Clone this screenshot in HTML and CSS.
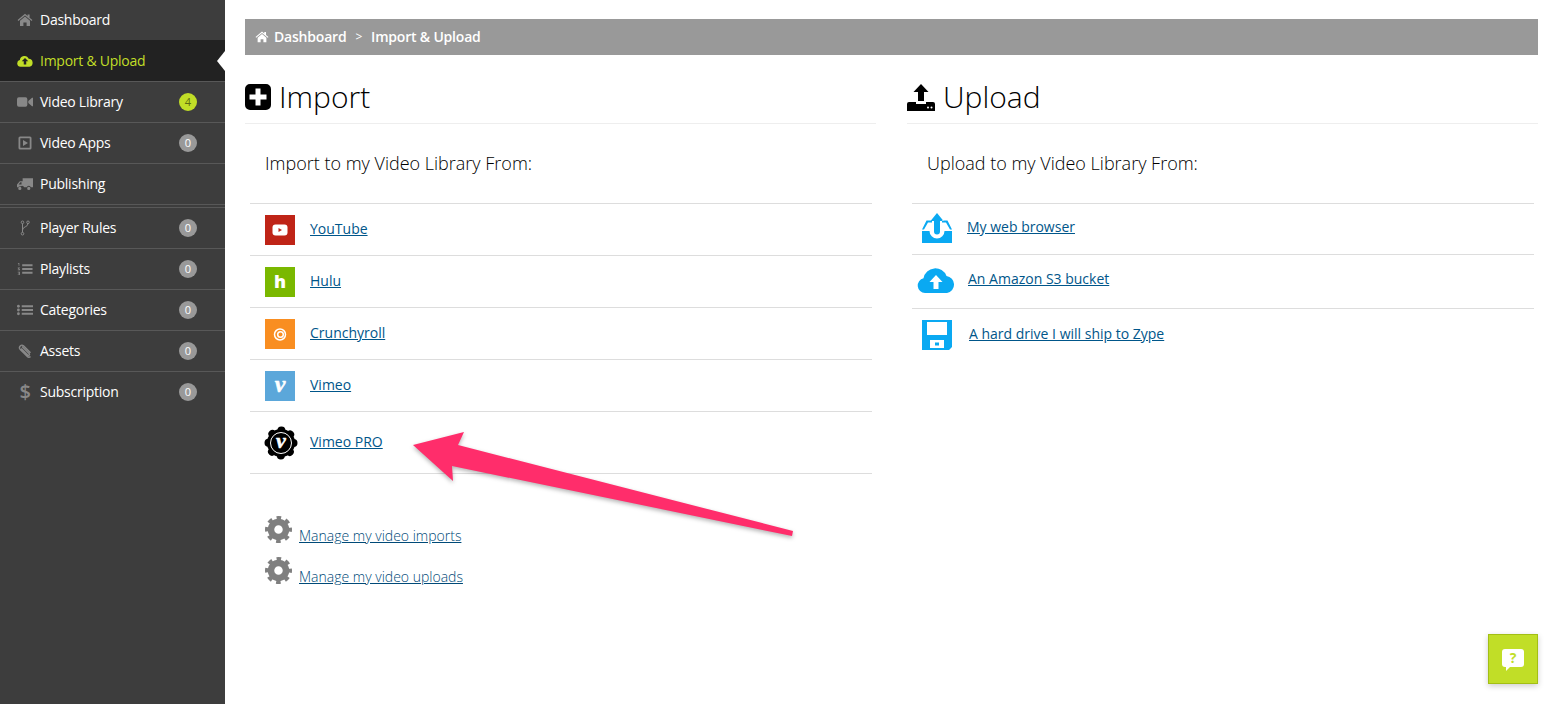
FILE: index.html
```html
<!DOCTYPE html>
<html lang="en">
<head>
    <meta charset="utf-8">
    <title>Import &amp; Upload</title>
    <meta name="viewport" content="width=device-width, initial-scale=1">
    <link rel="stylesheet" href="styles.css">
</head>
<body>

<div class="page">

    <ul class="sidebar">
        <li class="nav-item nav-first">
            <svg class="nav-icon" viewBox="0 0 16 16"><path d="M8 1.800l2.600 2.200V2.400h2v3.300L15.400 8l-.8.900L8 3.400 1.400 8.900.6 8zM8 4.600l5 4.200V14H9.600v-3.400H6.400V14H3V8.800z"/></svg>
            <span class="nav-text">Dashboard</span>
        </li>
        <li class="nav-item nav-active">
            <svg class="nav-icon" viewBox="0 0 18 14"><path fill-rule="evenodd" d="M4 13.500a3.800 3.800 0 0 1-.8-7.500A5.200 5.200 0 0 1 13.200 4.600 4.500 4.500 0 0 1 14 13.500zM9 3.500L5.300 7.400h2.300V11h2.800V7.400h2.300z"/></svg>
            <span class="nav-text">Import &amp; Upload</span>
        </li>
        <li class="nav-item">
            <svg class="nav-icon" viewBox="0 0 17 14"><path d="M0 4a2 2 0 0 1 2-2h7a2 2 0 0 1 2 2v6a2 2 0 0 1-2 2H2a2 2 0 0 1-2-2zM12 6l4-3.500h1v9h-1l-4-3.500z"/></svg>
            <span class="nav-text">Video Library</span>
            <span class="badge badge-green">4</span>
        </li>
        <li class="nav-item">
            <svg class="nav-icon" viewBox="0 0 16 16"><path fill-rule="evenodd" d="M3 1.500h10A1.500 1.500 0 0 1 14.500 3v10a1.500 1.500 0 0 1-1.500 1.500H3A1.500 1.500 0 0 1 1.500 13V3A1.500 1.500 0 0 1 3 1.500zM3.300 3.300v9.400h9.400V3.300zM6 5l5 3-5 3z"/></svg>
            <span class="nav-text">Video Apps</span>
            <span class="badge">0</span>
        </li>
        <li class="nav-item nav-group-end">
            <svg class="nav-icon" viewBox="0 0 17 14"><path fill-rule="evenodd" d="M6 1h11v9.500h-2.300a2.300 2.300 0 0 0-4.400 0H7.700A2.300 2.300 0 0 0 4 9.500a2.300 2.300 0 0 0-2.700 1H0V7.500L3 4h3zM4.800 5.200H3.600L1.700 7.400h3.100zM3 10a1.700 1.700 0 1 1 0 3.400A1.700 1.700 0 0 1 3 10zM12.500 10a1.700 1.700 0 1 1 0 3.400 1.700 1.700 0 0 1 0-3.400z"/></svg>
            <span class="nav-text">Publishing</span>
        </li>
        <li class="nav-item">
            <svg class="nav-icon" viewBox="0 0 16 16"><g fill="none" stroke="#888" stroke-width="1"><circle cx="5.500" cy="2.300" r="1.300"/><circle cx="11" cy="2.300" r="1.300"/><circle cx="5.500" cy="13.700" r="1.300"/><path d="M5.500 3.600v8.800M11 3.600c0 3.500-5.500 3-5.500 6.400"/></g></svg>
            <span class="nav-text">Player Rules</span>
            <span class="badge">0</span>
        </li>
        <li class="nav-item">
            <svg class="nav-icon" viewBox="0 0 17 14"><path d="M5.500 2h11v2h-11zM5.500 6h11v2h-11zM5.500 10h11v2h-11zM1 .5h1.500v3H1.700V1.400H1zM.8 5.500h2.400v.8H1.800l1.400 1.300v.7H.8v-.8h1.300L.8 6.200zM.8 10h2.400v3.500H.8v-.7h1.600v-.7H1.300v-.7h1.100v-.7H.8z"/></svg>
            <span class="nav-text">Playlists</span>
            <span class="badge">0</span>
        </li>
        <li class="nav-item">
            <svg class="nav-icon" viewBox="0 0 17 14"><path d="M5 2h12v2H5zM5 6h12v2H5zM5 10h12v2H5z"/><circle cx="1.500" cy="3" r="1.500"/><circle cx="1.500" cy="7" r="1.500"/><circle cx="1.500" cy="11" r="1.500"/></svg>
            <span class="nav-text">Categories</span>
            <span class="badge">0</span>
        </li>
        <li class="nav-item">
            <svg class="nav-icon" viewBox="0 0 16 16"><path fill="none" stroke="#888" stroke-width="1.400" d="M13.500 13.500a2.200 2.200 0 0 1-3.200 0L3 6.200a2.500 2.500 0 0 1 3.500-3.500l7 7M5 3.500l7.300 7.300a1 1 0 0 1-1.400 1.400L4.200 5.500"/></svg>
            <span class="nav-text">Assets</span>
            <span class="badge">0</span>
        </li>
        <li class="nav-item">
            <span class="nav-icon nav-glyph">$</span>
            <span class="nav-text">Subscription</span>
            <span class="badge">0</span>
        </li>
    </ul>

    <div class="content">

        <div class="breadcrumb">
            <svg class="crumb-home" viewBox="0 0 16 16"><path d="M8 1.800l2.600 2.200V2.400h2v3.300L15.400 8l-.8.900L8 3.400 1.400 8.900.6 8zM8 4.600l5 4.200V14H9.600v-3.400H6.400V14H3V8.800z"/></svg>
            <span>Dashboard</span>
            <span class="crumb-sep">&gt;</span>
            <span>Import &amp; Upload</span>
        </div>

        <div class="columns">

            <div class="column">
                <h2 class="column-title">
                    <svg class="title-icon" viewBox="0 0 26 26"><path fill-rule="evenodd" d="M5 0h16a5 5 0 0 1 5 5v16a5 5 0 0 1-5 5H5a5 5 0 0 1-5-5V5a5 5 0 0 1 5-5zM10.500 4.500v6h-6v5h6v6h5v-6h6v-5h-6v-6z"/></svg>
                    Import
                </h2>
                <p class="lead">Import to my Video Library From:</p>
                <ul class="sources">
                    <li class="source">
                        <svg class="source-icon" viewBox="0 0 30 30"><rect width="30" height="30" fill="#bf2417"/><rect x="7.500" y="9.500" width="15" height="11" rx="3" fill="#fff"/><path d="M13.500 13l3.500 2-3.500 2z" fill="#bf2417"/></svg>
                        <a href="#">YouTube</a>
                    </li>
                    <li class="source">
                        <svg class="source-icon" viewBox="0 0 30 30"><rect width="30" height="30" fill="#7ab800"/><text x="15" y="20.500" class="mark mark-hulu">h</text></svg>
                        <a href="#">Hulu</a>
                    </li>
                    <li class="source">
                        <svg class="source-icon" viewBox="0 0 30 30"><rect width="30" height="30" fill="#f98e21"/><g fill="none" stroke="#fff"><circle cx="15" cy="15.500" r="5.500" stroke-width="1.500"/><circle cx="15.500" cy="15.500" r="2.800" stroke-width="1.500"/></g></svg>
                        <a href="#">Crunchyroll</a>
                    </li>
                    <li class="source">
                        <svg class="source-icon" viewBox="0 0 30 30"><rect width="30" height="30" fill="#5ba7da"/><text x="15" y="20.500" class="mark mark-vimeo">v</text></svg>
                        <a href="#">Vimeo</a>
                    </li>
                    <li class="source source-tall">
                        <svg class="source-icon" viewBox="0 0 34 34"><circle cx="17" cy="17" r="14"/><circle cx="17" cy="17" r="12.500" fill="none" stroke="#000" stroke-width="8" stroke-linecap="round" stroke-dasharray="0.010 9.807"/><circle cx="17" cy="17" r="10.500" fill="none" stroke="#fff" stroke-width="1"/><text x="17" y="22" class="mark mark-pro">v</text></svg>
                        <a href="#">Vimeo PRO</a>
                    </li>
                </ul>
                <ul class="manage">
                    <li class="manage-row">
                        <svg class="gear" viewBox="0 0 27 27"><circle cx="13.500" cy="13.500" r="7.500" fill="none" stroke="#7f7f7f" stroke-width="6.500"/><circle cx="13.500" cy="13.500" r="11.500" fill="none" stroke="#7f7f7f" stroke-width="4" stroke-dasharray="4.500 4.530" stroke-dashoffset="2.250"/></svg>
                        <a href="#">Manage my video imports</a>
                    </li>
                    <li class="manage-row">
                        <svg class="gear" viewBox="0 0 27 27"><circle cx="13.500" cy="13.500" r="7.500" fill="none" stroke="#7f7f7f" stroke-width="6.500"/><circle cx="13.500" cy="13.500" r="11.500" fill="none" stroke="#7f7f7f" stroke-width="4" stroke-dasharray="4.500 4.530" stroke-dashoffset="2.250"/></svg>
                        <a href="#">Manage my video uploads</a>
                    </li>
                </ul>
            </div>

            <div class="column">
                <h2 class="column-title">
                    <svg class="title-icon title-icon-upload" viewBox="0 0 28 27"><path d="M14 0l7.500 8H17v9h-6V8H6.500zM0 20a2 2 0 0 1 2-2h7v2h10v-2h7a2 2 0 0 1 2 2v7H0z"/><circle cx="21" cy="23.500" r="1" fill="#fff"/><circle cx="24.500" cy="23.500" r="1" fill="#fff"/></svg>
                    Upload
                </h2>
                <p class="lead">Upload to my Video Library From:</p>
                <ul class="sources sources-upload">
                    <li class="source upload-browser">
                        <svg class="upload-icon" viewBox="0 0 30 30"><path fill="#0aa9f2" d="M15 0l6.500 8H18v10.500a3 3 0 0 1-6 0V8H8.500zM0 18h7.500a7.500 7.500 0 0 0 15 0H30v12H0zM4.500 7.500H10v2H6L2 16.500H0zM25.500 7.500H20v2h4l4 7h2z"/></svg>
                        <a href="#">My web browser</a>
                    </li>
                    <li class="source upload-bucket">
                        <svg class="upload-icon upload-icon-cloud" viewBox="0 0 38 26"><path fill="#0aa9f2" fill-rule="evenodd" d="M8 26a7.500 7.500 0 0 1-1.500-14.800A12 12 0 0 1 29.500 9 8.600 8.600 0 0 1 30 26zM19 8l-6.500 7h4v7h5v-7h4z"/></svg>
                        <a href="#">An Amazon S3 bucket</a>
                    </li>
                    <li class="source upload-drive">
                        <svg class="upload-icon" viewBox="0 0 30 30"><path fill="#0aa9f2" fill-rule="evenodd" d="M0 0h30v27l-3 3H0zM5 2v13h20V2zM8 20v8h14v-8zM13 22.500h4v3h-4z"/></svg>
                        <a href="#">A hard drive I will ship to Zype</a>
                    </li>
                </ul>
            </div>

        </div>
    </div>
</div>

<svg class="arrow" viewBox="0 0 1558 704"><path d="M413 445L464 432 458 445 793 531 792 536 452 466 453 481z"/></svg>

<div class="help-button">
    <div class="help-bubble">?</div>
</div>

</body>
</html>
```

FILE: styles.css
```css
body {
    font: normal 14px/20px "Open Sans", sans-serif;
    color: #000;
    margin: 0;
    padding: 0;
    background: #fff;
    overflow: hidden;
}

ul {
    list-style: none;
    margin: 0;
    padding: 0;
}

a {
    color: #00568a;
    text-decoration: underline;
}

.page {
    display: flex;
    height: 704px;
}

/* sidebar */

.sidebar {
    flex: 0 0 225px;
    background: #3d3d3d;
    color: #fff;
    letter-spacing: -0.25px;
}

.nav-item {
    position: relative;
    display: flex;
    align-items: center;
    height: 40px;
    padding: 0 28px 0 17px;
    border-bottom: 1px solid #585858;
}

.nav-first {
    height: 40px;
    border-bottom: 0;
}

.nav-group-end {
    height: 40px;
    margin-bottom: 3px;
    box-shadow: 0 2px 0 #3d3d3d, 0 3px 0 #585858;
}

.nav-item:last-child {
    border-bottom: 0;
}

.nav-active {
    height: 41px;
    background: #222;
    color: #c1de27;
}

.nav-active::after {
    content: "";
    position: absolute;
    right: 0;
    top: 11px;
    border-style: solid;
    border-width: 10px 8px 10px 0;
    border-color: transparent #fff transparent transparent;
}

.nav-icon {
    flex: 0 0 16px;
    width: 16px;
    height: 16px;
    margin-right: 7px;
    fill: #888;
}

.nav-active .nav-icon {
    fill: #c1de27;
}

.nav-glyph {
    color: #888;
    font-size: 20px;
    font-weight: 600;
    line-height: 16px;
    text-align: center;
}

.nav-text {
    flex: 1;
}

.badge {
    width: 18px;
    height: 18px;
    border-radius: 50%;
    background: #999;
    color: #fff;
    font-size: 11px;
    line-height: 18px;
    text-align: center;
    letter-spacing: 0;
}

.badge-green {
    background: #c1de27;
    color: #5d6b12;
}

/* content */

.content {
    flex: 1;
    padding: 19px 20px 0;
}

.breadcrumb {
    display: flex;
    align-items: center;
    height: 36px;
    padding-left: 10px;
    background: #999;
    color: #fff;
    font-weight: 600;
    letter-spacing: -0.2px;
}

.crumb-home {
    width: 14px;
    height: 14px;
    margin-right: 5px;
    fill: #fff;
}

.crumb-sep {
    margin: 0 9px;
    font-weight: 400;
    font-size: 12px;
}

.columns {
    display: grid;
    grid-template-columns: 631px 631px;
    column-gap: 31px;
}

.column-title {
    display: flex;
    align-items: center;
    height: 52px;
    margin: 0;
    padding-top: 16px;
    border-bottom: 1px solid #eee;
    font-size: 30px;
    font-weight: 300;
}

.title-icon {
    width: 26px;
    height: 26px;
    margin-right: 8px;
}

.title-icon-upload {
    width: 28px;
    height: 27px;
}

.lead {
    margin: 0;
    padding: 27px 0 28px 20px;
    font-size: 18px;
    font-weight: 300;
    line-height: 24px;
}

.sources {
    margin: 0 4px 0 5px;
    border-top: 1px solid #ddd;
}

.source {
    display: flex;
    align-items: center;
    height: 51px;
    padding-left: 15px;
    border-bottom: 1px solid #ddd;
}

.source a {
    margin-bottom: 2px;
}

.source-tall {
    height: 61px;
}

.source-icon {
    width: 30px;
    height: 30px;
    margin-right: 15px;
}

.source-tall .source-icon {
    width: 34px;
    height: 34px;
    margin: 0 12px 0 -1px;
}

.mark {
    fill: #fff;
    font-family: "Open Sans", sans-serif;
    font-weight: 800;
    text-anchor: middle;
}

.mark-hulu {
    font-size: 18px;
}

.mark-vimeo,
.mark-pro {
    font-family: "Liberation Serif", serif;
    font-weight: 700;
    font-style: italic;
    stroke: #fff;
    stroke-width: 0.5px;
}

.mark-vimeo {
    font-size: 24px;
}

.mark-pro {
    font-size: 22px;
}

.manage {
    margin-top: 42px;
    padding-left: 20px;
}

.manage-row {
    display: flex;
    align-items: flex-end;
    height: 27px;
    margin-bottom: 14px;
}

.gear {
    width: 27px;
    height: 27px;
    margin-right: 7px;
}

.manage-row a {
    color: #004a78;
    font-weight: 300;
    line-height: 16px;
    margin-bottom: -1px;
}

.sources-upload .source {
    padding-left: 10px;
}

.sources-upload .upload-browser a,
.sources-upload .upload-drive a {
    margin-bottom: 4px;
}

.sources-upload .upload-bucket a {
    margin-bottom: 6px;
}

.upload-browser {
    height: 50px;
}

.upload-bucket {
    height: 53px;
}

.upload-drive {
    height: 53px;
    border-bottom: 0;
}

.upload-icon {
    width: 30px;
    height: 30px;
    margin: 0 15px 2px 0;
}

.upload-icon-cloud {
    width: 38px;
    height: 26px;
    margin: 0 13px 3px -5px;
}

.upload-drive .upload-icon {
    margin-right: 17px;
}

/* overlays */

.arrow {
    position: absolute;
    left: 0;
    top: 0;
    width: 1558px;
    height: 704px;
    fill: #ff2d6b;
    filter: drop-shadow(0 2px 2px rgba(0, 0, 0, 0.3));
    pointer-events: none;
}

.help-button {
    position: absolute;
    left: 1488px;
    top: 634px;
    display: flex;
    align-items: center;
    justify-content: center;
    box-sizing: border-box;
    width: 50px;
    height: 50px;
    padding-bottom: 3px;
    background: #c1de27;
    border: 1px solid #a3bf14;
    box-shadow: 0 2px 6px rgba(0, 0, 0, 0.2);
}

.help-bubble {
    position: relative;
    width: 22px;
    height: 18px;
    border-radius: 3px;
    background: #fff;
    color: #c1de27;
    font-size: 14px;
    font-weight: 700;
    line-height: 18px;
    text-align: center;
}

.help-bubble::after {
    content: "";
    position: absolute;
    left: 4px;
    top: 18px;
    border-style: solid;
    border-width: 4px 4px 0 0;
    border-color: #fff transparent transparent transparent;
}
```
